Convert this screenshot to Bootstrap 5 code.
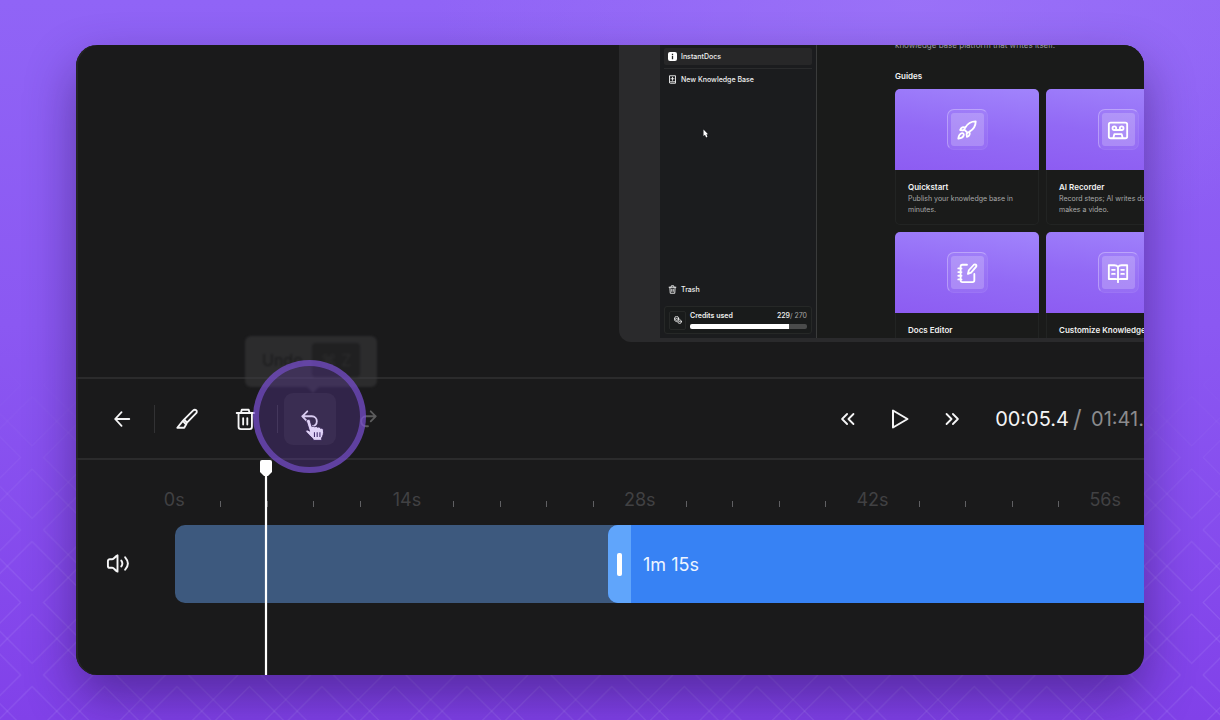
<!DOCTYPE html>
<html lang="en">
<head>
<meta charset="utf-8">
<meta name="viewport" content="width=device-width, initial-scale=1">
<title>InstantDocs video editor</title>
<link href="https://cdn.jsdelivr.net/npm/bootstrap@5.3.0/dist/css/bootstrap.min.css" rel="stylesheet">
<style>
  body { font-family: Inter, "Liberation Sans", sans-serif; background: #8242ea; color: #f4f4f5; }
  svg { display: block; flex: none; }
  .ico { fill: none; stroke: currentColor; stroke-width: 2; stroke-linecap: round; stroke-linejoin: round; }
  .ico-small { stroke-width: 2.4; }

  .stage { padding: 45px 76px; isolation: isolate;
    background: radial-gradient(ellipse 480px 260px at 75% 0, rgba(157,117,248,.75) 0%, rgba(157,117,248,0) 100%),
                linear-gradient(#9064f6 0%, #8b58f2 45%, #8141e9 100%); }
  .lattice { inset: 0; z-index: -1;
    -webkit-mask-image: linear-gradient(transparent 48%, #000 80%); mask-image: linear-gradient(transparent 48%, #000 80%); }

  .editor { background: #1a1a1b; border-radius: 21px; min-width: 0;
    box-shadow: 0 22px 50px rgba(30,10,70,.45), inset 2px 0 0 #242425; }

  /* preview with the recording */
  .preview { padding-bottom: 35px; }
  .recording { width: calc(100% - 543px); height: 297px; padding: 0 0 4px 41px; background: #2a2a2c; border-bottom-left-radius: 12px; }
  .app { background: #1a1b1a; font-size: 7px; line-height: 11px; }
  .side { flex: 0 0 157px; background: #1b1c1e; border-right: 1px solid #3a3b3b; padding: 3px 4px 4px; color: #f0f0f0; font-weight: 500; }
  .side a { color: inherit; gap: 4px; padding: 0 4px; height: 17px; }
  .side .current { background: #272728; border-radius: 2px; }
  .side .rule { height: 1px; background: #2a2b2c; margin: 3px 0 2px; }
  .side .trash { margin: auto 0 8px; }
  .credits { border: 1px solid #262827; border-radius: 3px; height: 28px; padding: 3px 4px; gap: 4px; background: #191b1b; line-height: 10px; }
  .credits .allowance { color: #a5a6a6; font-weight: 400; }
  .credit-ico { width: 17px; height: 19px; border: 1px solid #262827; border-radius: 2px; }
  .credits .progress { height: 5px; margin-top: 3px; background: #4a4b4b; border-radius: 2px; --bs-progress-bar-bg: #fff; }
  .pointer { left: 43px; top: 84px; }

  .docs { padding-left: 78px; min-width: 0; }
  .intro { margin-top: -6px; color: #9a9b9b; font-size: 8px; white-space: nowrap; line-height: 12px; }
  .guides-title { font-size: 8px; line-height: 12px; font-weight: 600; margin: 19px 0 7px; }
  .guides { display: grid; grid-template-columns: 144px 144px; gap: 7px; }
  .guide { box-shadow: inset 0 0 0 1px #222423; border-radius: 5px; color: #f1f1f1; height: 136px; text-decoration: none; overflow: hidden; white-space: nowrap; }
  .cover { height: 81px; background: linear-gradient(8deg, #8d5cf2 0%, #9269f5 45%, #a184fc 100%); }
  .tile-rim { width: 41px; height: 41px; border-radius: 7px; padding: 3px; border: 1px solid rgba(255,255,255,.05); border-top-color: rgba(255,255,255,.3); border-left-color: rgba(255,255,255,.3); background: rgba(255,255,255,.06); }
  .tile { background: rgba(255,255,255,.2); border-radius: 3px; color: #fff; width: 33px; height: 33px; }
  .guide-text { padding: 11px 13px 0; }
  .guide-text h3 { font-size: 8px; line-height: 12px; font-weight: 600; margin: 0; }
  .guide-text p { font-size: 7px; line-height: 11px; color: #a8a9a9; margin: 0; }

  /* toolbar */
  .tools { border-top: 2px solid #2b2b2c; border-bottom: 2px solid #2b2b2c; height: 83px; padding-left: 20px; white-space: nowrap; }
  .tool-group { gap: 6px; }
  .tool { width: 52px; height: 52px; padding: 0; border: 0; border-radius: 9px; background: none; color: #f5f5f6; display: flex; align-items: center; justify-content: center; }
  .tool:disabled { color: #5c5c5d; }
  .split { width: 1px; height: 28px; background: #323234; }
  .time { font-size: 20px; line-height: 24px; margin-left: 17px; }
  .slash { font-size: 24px; width: 22px; padding-left: 4px; }
  .total { color: #8b8b8d; }
  .undo-wrap { position: relative; }
  .undo-wrap .tool { background: #262627; }
  .ring { width: 113px; height: 113px; left: -31px; top: -33px; border: 6px solid rgba(120,80,205,.66); border-radius: 50%; background: rgba(126,70,220,.24); pointer-events: none; z-index: 2; }
  .hand { left: 20px; top: 25px; }
  .tip { left: -39px; top: -57px; width: 132px; height: 51px; padding: 7px 17px 9px; border-radius: 6px; background: rgba(62,62,63,.5); color: #1c1c1d; font-size: 16px; filter: blur(1px); }
  .tip kbd { background: #202021; color: #2b2b2c; width: 48px; height: 34px; border-radius: 4px; font-family: inherit; font-size: 16px; }
  .tip::after { content: ""; position: absolute; left: 62px; top: 51px; border: 6px solid transparent; border-top-color: rgba(62,62,63,.5); }

  /* timeline */
  .timeline { padding: 27px 0 71px; }
  .ruler { display: grid; grid-auto-flow: column; grid-auto-columns: calc(100% * 3 / 64); margin-left: 75px; height: 25px; color: #414143; font-size: 18px; line-height: 26px; overflow: hidden; }
  .ruler span { white-space: nowrap; display: flex; justify-content: center; }
  .ruler i { width: 1px; height: 6px; background: #606063; margin: 14px auto 0; }
  .track { margin-top: 13px; padding-left: 99px; }
  .track .tool { position: absolute; left: 15px; top: 12px; }
  .clips { background: #3d597e; border-radius: 10px 0 0 10px; height: 78px; padding-left: 433px; }
  .clip { background: #3782f4; border-radius: 10px 0 0 10px; color: #eef5ff; font-size: 18px; overflow: hidden; }
  .grip { width: 23px; background: #60a5fb; }
  .grip::before { content: ""; width: 5px; height: 23px; border-radius: 2px; background: #fff; }
  .playhead { left: 184px; top: 0; bottom: 0; width: 12px; }
  .playhead::after { content: ""; position: absolute; left: 5px; top: 12px; bottom: 0; width: 2px; background: #fff; box-shadow: 0 0 1px #fff; }
</style>
</head>
<body>
<div class="stage position-relative min-vh-100 d-flex">
  <svg class="lattice position-absolute w-100 h-100" aria-hidden="true">
    <defs>
      <pattern id="diamonds" x="-4.2" y="58.9" width="72.48" height="72.48" patternUnits="userSpaceOnUse">
        <g fill="none" stroke="#b79af8" stroke-opacity=".24" stroke-width="1">
          <path d="M36.24-24.8 97.24 36.2 36.24 97.2-24.76 36.2Z"/>
          <path d="M108.72-24.8 169.72 36.2 108.72 97.2 47.72 36.2Z"/>
          <path d="M-36.24-24.8 24.76 36.2-36.24 97.2-97.24 36.2Z"/>
          <path d="M36.24-97.28 97.24-36.28 36.24 24.72-24.76-36.28Z"/>
          <path d="M36.24 47.68 97.24 108.68 36.24 169.68-24.76 108.68Z"/>
        </g>
      </pattern>
    </defs>
    <rect width="100%" height="100%" fill="url(#diamonds)"/>
  </svg>

  <main class="editor flex-grow-1 d-flex flex-column overflow-hidden">
    <section class="preview" aria-label="Preview">
      <div class="recording ms-auto overflow-hidden">
        <div class="app d-flex h-100 overflow-hidden">
          <nav class="side position-relative d-flex flex-column">
            <a class="current d-flex align-items-center text-decoration-none" href="#">
              <svg width="9" height="9" viewBox="0 0 9 9"><rect width="9" height="9" rx="2" fill="#fff"/><path d="M4.5 1.800v1.400M4.500 4v3.200" stroke="#222" stroke-width="1.3"/></svg>InstantDocs
            </a>
            <div class="rule"></div>
            <a class="d-flex align-items-center text-decoration-none" href="#">
              <svg class="ico ico-small" width="9" height="9" viewBox="0 0 24 24"><path d="M4 19V2h16v20H6a2 2 0 0 1-2-2 2 2 0 0 1 2-2h14M12 6v8M8 10h8"/></svg>New Knowledge Base
            </a>
            <svg class="pointer position-absolute" width="6" height="9" viewBox="0 0 6 9"><path d="M.5.500v6.500l1.500-1.300 1.100 2.700 1.300-.6-1-2.500h1.600z" fill="#fff"/></svg>
            <a class="trash d-flex align-items-center text-decoration-none" href="#">
              <svg class="ico ico-small" width="9" height="9" viewBox="0 0 24 24"><path d="M3 6h18M5 6l1 16h12l1-16M8 6l1-4h6l1 4M10 11v6M14 11v6"/></svg>Trash
            </a>
            <div class="credits d-flex align-items-center">
              <div class="credit-ico d-flex align-items-center justify-content-center">
                <svg class="ico ico-small" width="8" height="8" viewBox="0 0 24 24"><circle cx="8" cy="7" r="6"/><circle cx="17" cy="17" r="5.500"/><path d="M2 7v5c0 3 3 5 7 5M14 7v4M6 7h4M15 17h4"/></svg>
              </div>
              <div class="flex-grow-1">
                <div class="d-flex justify-content-between"><span class="fw-semibold">Credits used</span><span>229<span class="allowance">/ 270</span></span></div>
                <div class="progress" role="progressbar" aria-label="Credits used" aria-valuenow="229" aria-valuemin="0" aria-valuemax="270"><div class="progress-bar" style="width:85%"></div></div>
              </div>
            </div>
          </nav>
          <div class="docs flex-grow-1">
            <p class="intro mb-0">knowledge base platform that writes itself.</p>
            <h2 class="guides-title">Guides</h2>
            <div class="guides">
              <a class="guide" href="#">
                <div class="cover d-flex align-items-center justify-content-center"><div class="tile-rim"><div class="tile d-flex align-items-center justify-content-center">
                  <svg class="ico" width="22" height="22" viewBox="0 0 24 24"><path d="M10 9.500C12.500 5 16.500 2.500 21.500 2.500c0 5-2.500 9-7 11.500l-2 1-3.500-3.500zM10 9.500c-2-1-4.500-.500-5.500 2.500l3 .5 1.500-1M14.500 14c1 2 .5 4.500-2.500 5.500l-.5-3 1-1.500M6.500 15.500c-2.500.5-3.500 2.500-4 6 3.500-.5 5.500-1.500 6-4 .2-1.300-.7-2.200-2-2z"/></svg>
                </div></div></div>
                <div class="guide-text"><h3>Quickstart</h3><p>Publish your knowledge base in<br>minutes.</p></div>
              </a>
              <a class="guide" href="#">
                <div class="cover d-flex align-items-center justify-content-center"><div class="tile-rim"><div class="tile d-flex align-items-center justify-content-center">
                  <svg class="ico" width="22" height="22" viewBox="0 0 24 24"><rect x="2" y="4" width="20" height="17" rx="2"/><circle cx="8" cy="10" r="2"/><circle cx="16" cy="10" r="2"/><path d="M8 12h8M7 20.500l1-4h8l1 4"/></svg>
                </div></div></div>
                <div class="guide-text"><h3>AI Recorder</h3><p>Record steps; AI writes docs<br>makes a video.</p></div>
              </a>
              <a class="guide" href="#">
                <div class="cover d-flex align-items-center justify-content-center"><div class="tile-rim"><div class="tile d-flex align-items-center justify-content-center">
                  <svg class="ico" width="22" height="22" viewBox="0 0 24 24"><path d="M12 3H7a2 2 0 0 0-2 2v15a2 2 0 0 0 2 2h11a2 2 0 0 0 2-2v-7M2.500 7H6M2.500 11H6M2.500 15H6M2.500 19H6M13 13l1-4 5.500-6c1-1 3.500 0 2.500 2l-5.500 6.500z"/></svg>
                </div></div></div>
                <div class="guide-text"><h3>Docs Editor</h3></div>
              </a>
              <a class="guide" href="#">
                <div class="cover d-flex align-items-center justify-content-center"><div class="tile-rim"><div class="tile d-flex align-items-center justify-content-center">
                  <svg class="ico" width="22" height="22" viewBox="0 0 24 24"><path d="M12 5.500C11 4 9.500 3.500 8 3.500H2v15h7c1.500 0 3 .5 3 1 0-.5 1.500-1 3-1h7v-15h-6c-1.500 0-3 .5-4 2V22M5.500 8.500h3M5.500 13h3M15.500 8.500h3M15.500 13h3"/></svg>
                </div></div></div>
                <div class="guide-text"><h3>Customize Knowledge</h3></div>
              </a>
            </div>
          </div>
        </div>
      </div>
    </section>

    <div class="tools d-flex align-items-center justify-content-between" role="toolbar" aria-label="Editing">
      <div class="tool-group d-flex align-items-center">
        <button class="tool" type="button" aria-label="Back"><svg class="ico" width="20" height="20" viewBox="0 0 22 22"><path d="M19 11H3.500M10.500 3.500 3.500 11l7 7.500"/></svg></button>
        <span class="split"></span>
        <button class="tool" type="button" aria-label="Cut"><svg class="ico" width="24" height="24" viewBox="0 0 26 26"><path d="M10 13.500 19.500 4c1-1 2.500-1.300 3.500-.5s.7 2.500-.3 3.500L13 17M10 13.500l3 3.500M10 13.500 8.500 15l3.500 4 1-2M8.500 15 2.500 22.500h7.500l2-3.500"/></svg></button>
        <button class="tool" type="button" aria-label="Delete"><svg class="ico" width="24" height="24" viewBox="0 0 26 26"><path d="M4 6.500h19M6 6.500v15A2.500 2.500 0 0 0 8.500 24h9.500a2.500 2.500 0 0 0 2.500-2.500v-15M8.500 6.500l1-3.500h7.500l1 3.500M11 12v7M15.500 12v7"/></svg></button>
        <span class="split"></span>
        <div class="undo-wrap">
          <div class="tip position-absolute d-flex align-items-center justify-content-between" role="tooltip"><span>Undo</span><kbd class="d-flex align-items-center justify-content-center p-0">⌘ Z</kbd></div>
          <button class="tool" type="button" aria-label="Undo"><svg class="ico" width="20" height="20" viewBox="0 0 22 22"><path d="M8 2.500 2.500 8 8 13.500M2.500 8H13c3.500 0 5.500 2.500 5.500 5.500S16.500 19 13 19"/></svg></button>
          <svg class="hand position-absolute" width="22" height="24" viewBox="0 0 20 22"><path d="M3 1.500c1.500-.8 2.500.3 2.800 1.500l1.400 5c.8-.8 2-.6 2.500.3.900-.8 2.200-.6 2.700.3 1-.6 2.300-.2 2.600.9 1.300-.5 2.500.2 2.700 1.500.4 3-.3 5.500-1.700 7.500l.3 2H8.500l-.4-1.500C5.500 17 4 14.500 1.800 12.800c-.9-1.300.8-2.600 2.600-1.200l.6.5L2.300 3.500c-.2-.8 0-1.500.7-2z" fill="#fff" stroke="#1d1726" stroke-width=".8"/><path d="M9.500 13v4.500M12 13v4.500M14.500 13v4.500" stroke="#33264a" stroke-width="1"/></svg>
          <div class="ring position-absolute"></div>
        </div>
        <button class="tool" type="button" aria-label="Redo" disabled><svg class="ico" width="20" height="20" viewBox="0 0 22 22"><path d="M14 2.500 19.500 8 14 13.500M19.500 8H9c-3.500 0-5.500 2.500-5.500 5.500S5.500 19 9 19h2"/></svg></button>
      </div>
      <div class="d-flex align-items-center">
        <button class="tool" type="button" aria-label="Rewind"><svg class="ico" width="20" height="20" viewBox="0 0 22 22"><path d="M10 5.500 4.500 11l5.500 5.500M17 5.500 11.500 11l5.500 5.500"/></svg></button>
        <button class="tool" type="button" aria-label="Play"><svg class="ico" width="24" height="24" viewBox="0 0 24 24"><path d="M5 3.500v17L19.500 12z"/></svg></button>
        <button class="tool" type="button" aria-label="Forward"><svg class="ico" width="20" height="20" viewBox="0 0 22 22"><path d="M5 5.500 10.500 11 5 16.500M12 5.500l5.500 5.500-5.500 5.500"/></svg></button>
        <div class="time d-flex"><span>00:05.4</span><span class="total slash">/</span><span class="total">01:41.</span></div>
      </div>
    </div>

    <section class="timeline position-relative flex-grow-1" aria-label="Timeline">
      <div class="ruler"><span>0s</span><i></i><i></i><i></i><i></i><span>14s</span><i></i><i></i><i></i><i></i><span>28s</span><i></i><i></i><i></i><i></i><span>42s</span><i></i><i></i><i></i><i></i><span>56s</span></div>
      <div class="track position-relative">
        <button class="tool" type="button" aria-label="Volume"><svg class="ico" width="23" height="23" viewBox="0 0 24 24"><path d="M12 3.500v17c-2.500-1-3.500-4-5.500-4H4A2 2 0 0 1 2 14.500v-5a2 2 0 0 1 2-2h2.500c2 0 3-3 5.500-4zM16 9c1.300 1.800 1.300 4.200 0 6M20 5.500c3.500 4 3.500 9 0 13"/></svg></button>
        <div class="clips">
          <div class="clip d-flex h-100"><span class="grip d-flex align-items-center justify-content-center"></span><span class="align-self-center ps-2 ms-1">1m 15s</span></div>
        </div>
      </div>
      <div class="playhead position-absolute"><svg width="12" height="17" viewBox="0 0 12 17"><path d="M2 0h8a2 2 0 0 1 2 2v10l-4 4H4l-4-4V2a2 2 0 0 1 2-2z" fill="#fff"/></svg></div>
    </section>
  </main>
</div>
<script src="https://cdn.jsdelivr.net/npm/bootstrap@5.3.0/dist/js/bootstrap.bundle.min.js"></script>
</body>
</html>
